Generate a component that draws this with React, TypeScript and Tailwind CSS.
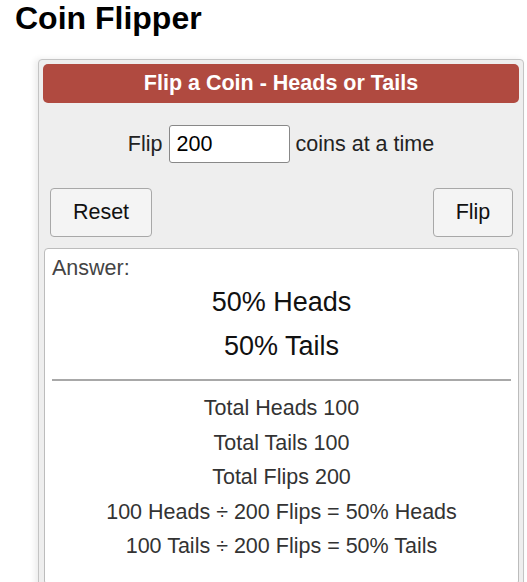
export default function App() {
    const lines = [
        "Total Heads 100",
        "Total Tails 100",
        "Total Flips 200",
        "100 Heads ÷ 200 Flips = 50% Heads",
        "100 Tails ÷ 200 Flips = 50% Tails",
    ];

    return (
        <div className="bg-white min-h-[582px] font-['Liberation_Sans',Arial,sans-serif] text-black">
            {/* Page title */}
            <h1 className="px-[15px] pt-[2px] text-[32px] leading-[32px] font-bold">Coin Flipper</h1>

            {/* Calculator panel */}
            <div className="ml-[38px] mt-[25px] w-[486px] p-1 bg-[#eeeeee] border border-[#c4c4c4] rounded-[4px] shadow-[-3px_0_6px_rgba(0,0,0,0.08)]">
                <div className="h-[39px] flex items-center justify-center bg-[#b04a40] rounded-[5px] text-white font-bold text-[21.5px]">
                    Flip a Coin - Heads or Tails
                </div>

                <div className="mt-[22px] flex items-center justify-center gap-[6px] text-[21.5px] text-[#222]">
                    <span>Flip</span>
                    <input
                        type="text"
                        defaultValue="200"
                        className="w-[121px] h-[38px] px-[7px] bg-white border border-[#888] rounded-[3px] text-[21.5px] text-black outline-none"
                    />
                    <span>coins at a time</span>
                </div>

                <div className="mt-[25px] pl-[7px] pr-[6px] flex justify-between">
                    <button className="w-[102px] h-[49px] bg-[#f4f4f4] border border-[#a8a8a8] rounded-[4px] text-[21.5px] text-[#111]">
                        Reset
                    </button>
                    <button className="w-[80px] h-[49px] bg-[#f4f4f4] border border-[#a8a8a8] rounded-[4px] text-[21.5px] text-[#111]">
                        Flip
                    </button>
                </div>

                {/* Answer box */}
                <div className="mt-[11px] ml-px bg-white border border-[#bcbcbc] rounded-[4px] px-[7px] pt-[6px] pb-[20px]">
                    <div className="text-[21.5px] leading-[26px] text-[#444]">Answer:</div>
                    <div className="text-center text-[27px] leading-[44px] text-[#111]">
                        <div className="-mt-[1px]">50% Heads</div>
                        <div>50% Tails</div>
                    </div>
                    <hr className="mt-[11px] border-t-2 border-[#a8a8a8] border-b-0" />
                    <div className="mt-[10px] text-center text-[21.5px] leading-[34.5px] text-[#333]">
                        {lines.map((l) => (
                            <div key={l}>{l}</div>
                        ))}
                    </div>
                </div>
            </div>
        </div>
    );
}
